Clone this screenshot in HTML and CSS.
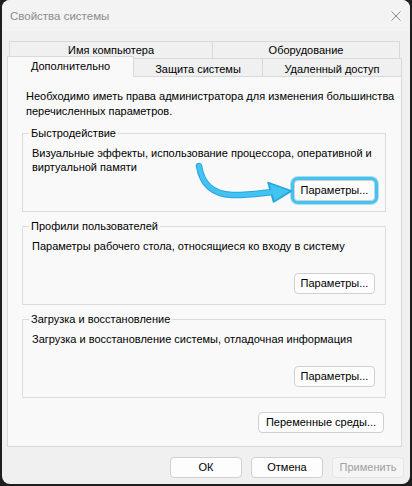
FILE: index.html
```html
<!DOCTYPE html>
<html lang="ru">
<head>
<meta charset="utf-8">
<title>Свойства системы</title>
<link rel="stylesheet" href="styles.css">
</head>
<body>
<div class="window">
  <div class="titlebar">
    <span class="title">Свойства системы</span>
    <svg class="close" width="10" height="10" viewBox="0 0 10 10"><path d="M0.5 0.5 L9.5 9.5 M9.5 0.5 L0.5 9.5" stroke="#8a8a8a" stroke-width="1" fill="none"/></svg>
  </div>
  <div class="content">
    <div class="tabs">
      <div class="tab-row back">
        <div class="tab t-name">Имя компьютера</div>
        <div class="tab t-hw">Оборудование</div>
      </div>
      <div class="tab-row front">
        <div class="tab active t-adv">Дополнительно</div>
        <div class="tab t-prot">Защита системы</div>
        <div class="tab t-remote">Удаленный доступ</div>
      </div>
    </div>
    <div class="panel">
      <p class="intro">Необходимо иметь права администратора для изменения большинства<br>перечисленных параметров.</p>
      <div class="group">
        <div class="group-title">Быстродействие</div>
        <p class="group-desc">Визуальные эффекты, использование процессора, оперативной и<br>виртуальной памяти</p>
        <button class="btn btn-group highlight">Параметры...</button>
      </div>
      <div class="group">
        <div class="group-title">Профили пользователей</div>
        <p class="group-desc">Параметры рабочего стола, относящиеся ко входу в систему</p>
        <button class="btn btn-group">Параметры...</button>
      </div>
      <div class="group">
        <div class="group-title">Загрузка и восстановление</div>
        <p class="group-desc">Загрузка и восстановление системы, отладочная информация</p>
        <button class="btn btn-group">Параметры...</button>
      </div>
      <div class="env-row">
        <button class="btn btn-env">Переменные среды...</button>
      </div>
    </div>
    <div class="footer">
      <button class="btn btn-foot">ОК</button>
      <button class="btn btn-foot">Отмена</button>
      <button class="btn btn-foot disabled">Применить</button>
    </div>
  </div>
</div>
<svg class="arrow" width="412" height="486" viewBox="0 0 412 486">
  <path d="M199 166 C 202 184, 212 194, 232 195 C 245 195.5, 258 193.5, 272 192" stroke="#2aa6dc" stroke-width="6.5" fill="none" stroke-linecap="round"/>
  <polygon points="268,182.5 291.5,191 273.5,202" fill="#2aa6dc" stroke="#2aa6dc" stroke-width="1.5" stroke-linejoin="round"/>
  <path d="M199 166 C 202 184, 212 194, 232 195 C 245 195.5, 258 193.5, 272 192" stroke="#42c3f2" stroke-width="4.5" fill="none" stroke-linecap="round"/>
  <polygon points="269.5,184 289.5,191 274.5,200.5" fill="#42c3f2"/>
</svg>
</body>
</html>
```
FILE: styles.css
```css
* { box-sizing: border-box; }
html, body { margin: 0; padding: 0; }
body {
  width: 412px;
  height: 486px;
  background: #1e1e1e;
  font-family: "Liberation Sans", Arial, sans-serif;
  font-size: 11px;
  color: #000;
  overflow: hidden;
}
.window {
  margin-left: 2px;
  width: 408px;
  height: 484px;
  border-radius: 8px;
  background: #f0f0f0;
  overflow: hidden;
}
.titlebar {
  height: 31px;
  background: #f3f3f3;
  display: flex;
  align-items: center;
  padding-left: 8px;
  padding-right: 9px;
  justify-content: space-between;
}
.title { color: #8c8c8c; line-height: 14px; margin-top: 1px; font-size: 11.5px; }
.close { display: block; }
.content { padding-top: 10px; }
.tab-row { display: flex; }
.tab-row.back { margin-left: 7px; height: 17px; }
.tab-row.front { margin-left: 5px; height: 18px; }
.tab {
  border: 1px solid #d9d9d9;
  border-bottom: none;
  background: #f0f0f0;
  text-align: center;
  line-height: 15px;
  white-space: nowrap;
}
.tab + .tab { border-left: none; }
.t-name { width: 204px; padding-top: 1px; }
.t-hw { width: 187px; padding-top: 1px; }
.front .tab { padding-top: 3px; }
.t-adv {
  width: 127px;
  height: 21px;
  margin-top: -2px;
  background: #f9f9f9;
  position: relative;
  z-index: 1;
}
.front .t-adv { padding-top: 2px; }
.t-prot { width: 129px; }
.t-remote { width: 139px; }
.panel {
  margin-left: 5px;
  width: 395px;
  height: 371px;
  border: 1px solid #d9d9d9;
  background: #f9f9f9;
  display: flex;
  flex-direction: column;
  align-items: flex-start;
}
.intro {
  margin: 12px 0 0 18px;
  line-height: 15px;
  white-space: nowrap;
}
.group {
  margin: 14px 0 0 14px;
  width: 364px;
  height: 79px;
  border: 1px solid #dcdcdc;
  display: flex;
  flex-direction: column;
  align-items: flex-start;
}
.group-title {
  margin: -8px 0 0 6px;
  padding: 0 2px;
  line-height: 14px;
  background: #f9f9f9;
}
.group-desc {
  margin: 6px 0 0 9px;
  line-height: 14px;
  white-space: nowrap;
}
.btn {
  font-family: inherit;
  font-size: 11px;
  color: #000;
  background: #fdfdfd;
  border: 1px solid #d0d0d0;
  border-radius: 4px;
  height: 21px;
  padding: 0;
  line-height: 17px;
}
.btn-group {
  width: 81px;
  margin-top: auto;
  margin-bottom: 10px;
  margin-right: 10px;
  align-self: flex-end;
}
.highlight {
  outline: 3px solid #42c3f2;
  outline-offset: 0;
  box-shadow: 0 0 0 4px rgba(42,166,220,0.35);
}
.env-row {
  align-self: stretch;
  display: flex;
  justify-content: flex-end;
  padding-right: 17px;
  margin-top: 14px;
}
.btn-env { width: 126px; }
.footer {
  display: flex;
  justify-content: flex-end;
  gap: 9px;
  padding-right: 6px;
  margin-top: 10px;
}
.btn-foot { width: 72px; }
.btn-foot.disabled {
  color: #a0a0a0;
  background: #f5f5f5;
  border-color: #e5e5e5;
}
.arrow {
  position: absolute;
  left: 0;
  top: 0;
  pointer-events: none;
}
```
